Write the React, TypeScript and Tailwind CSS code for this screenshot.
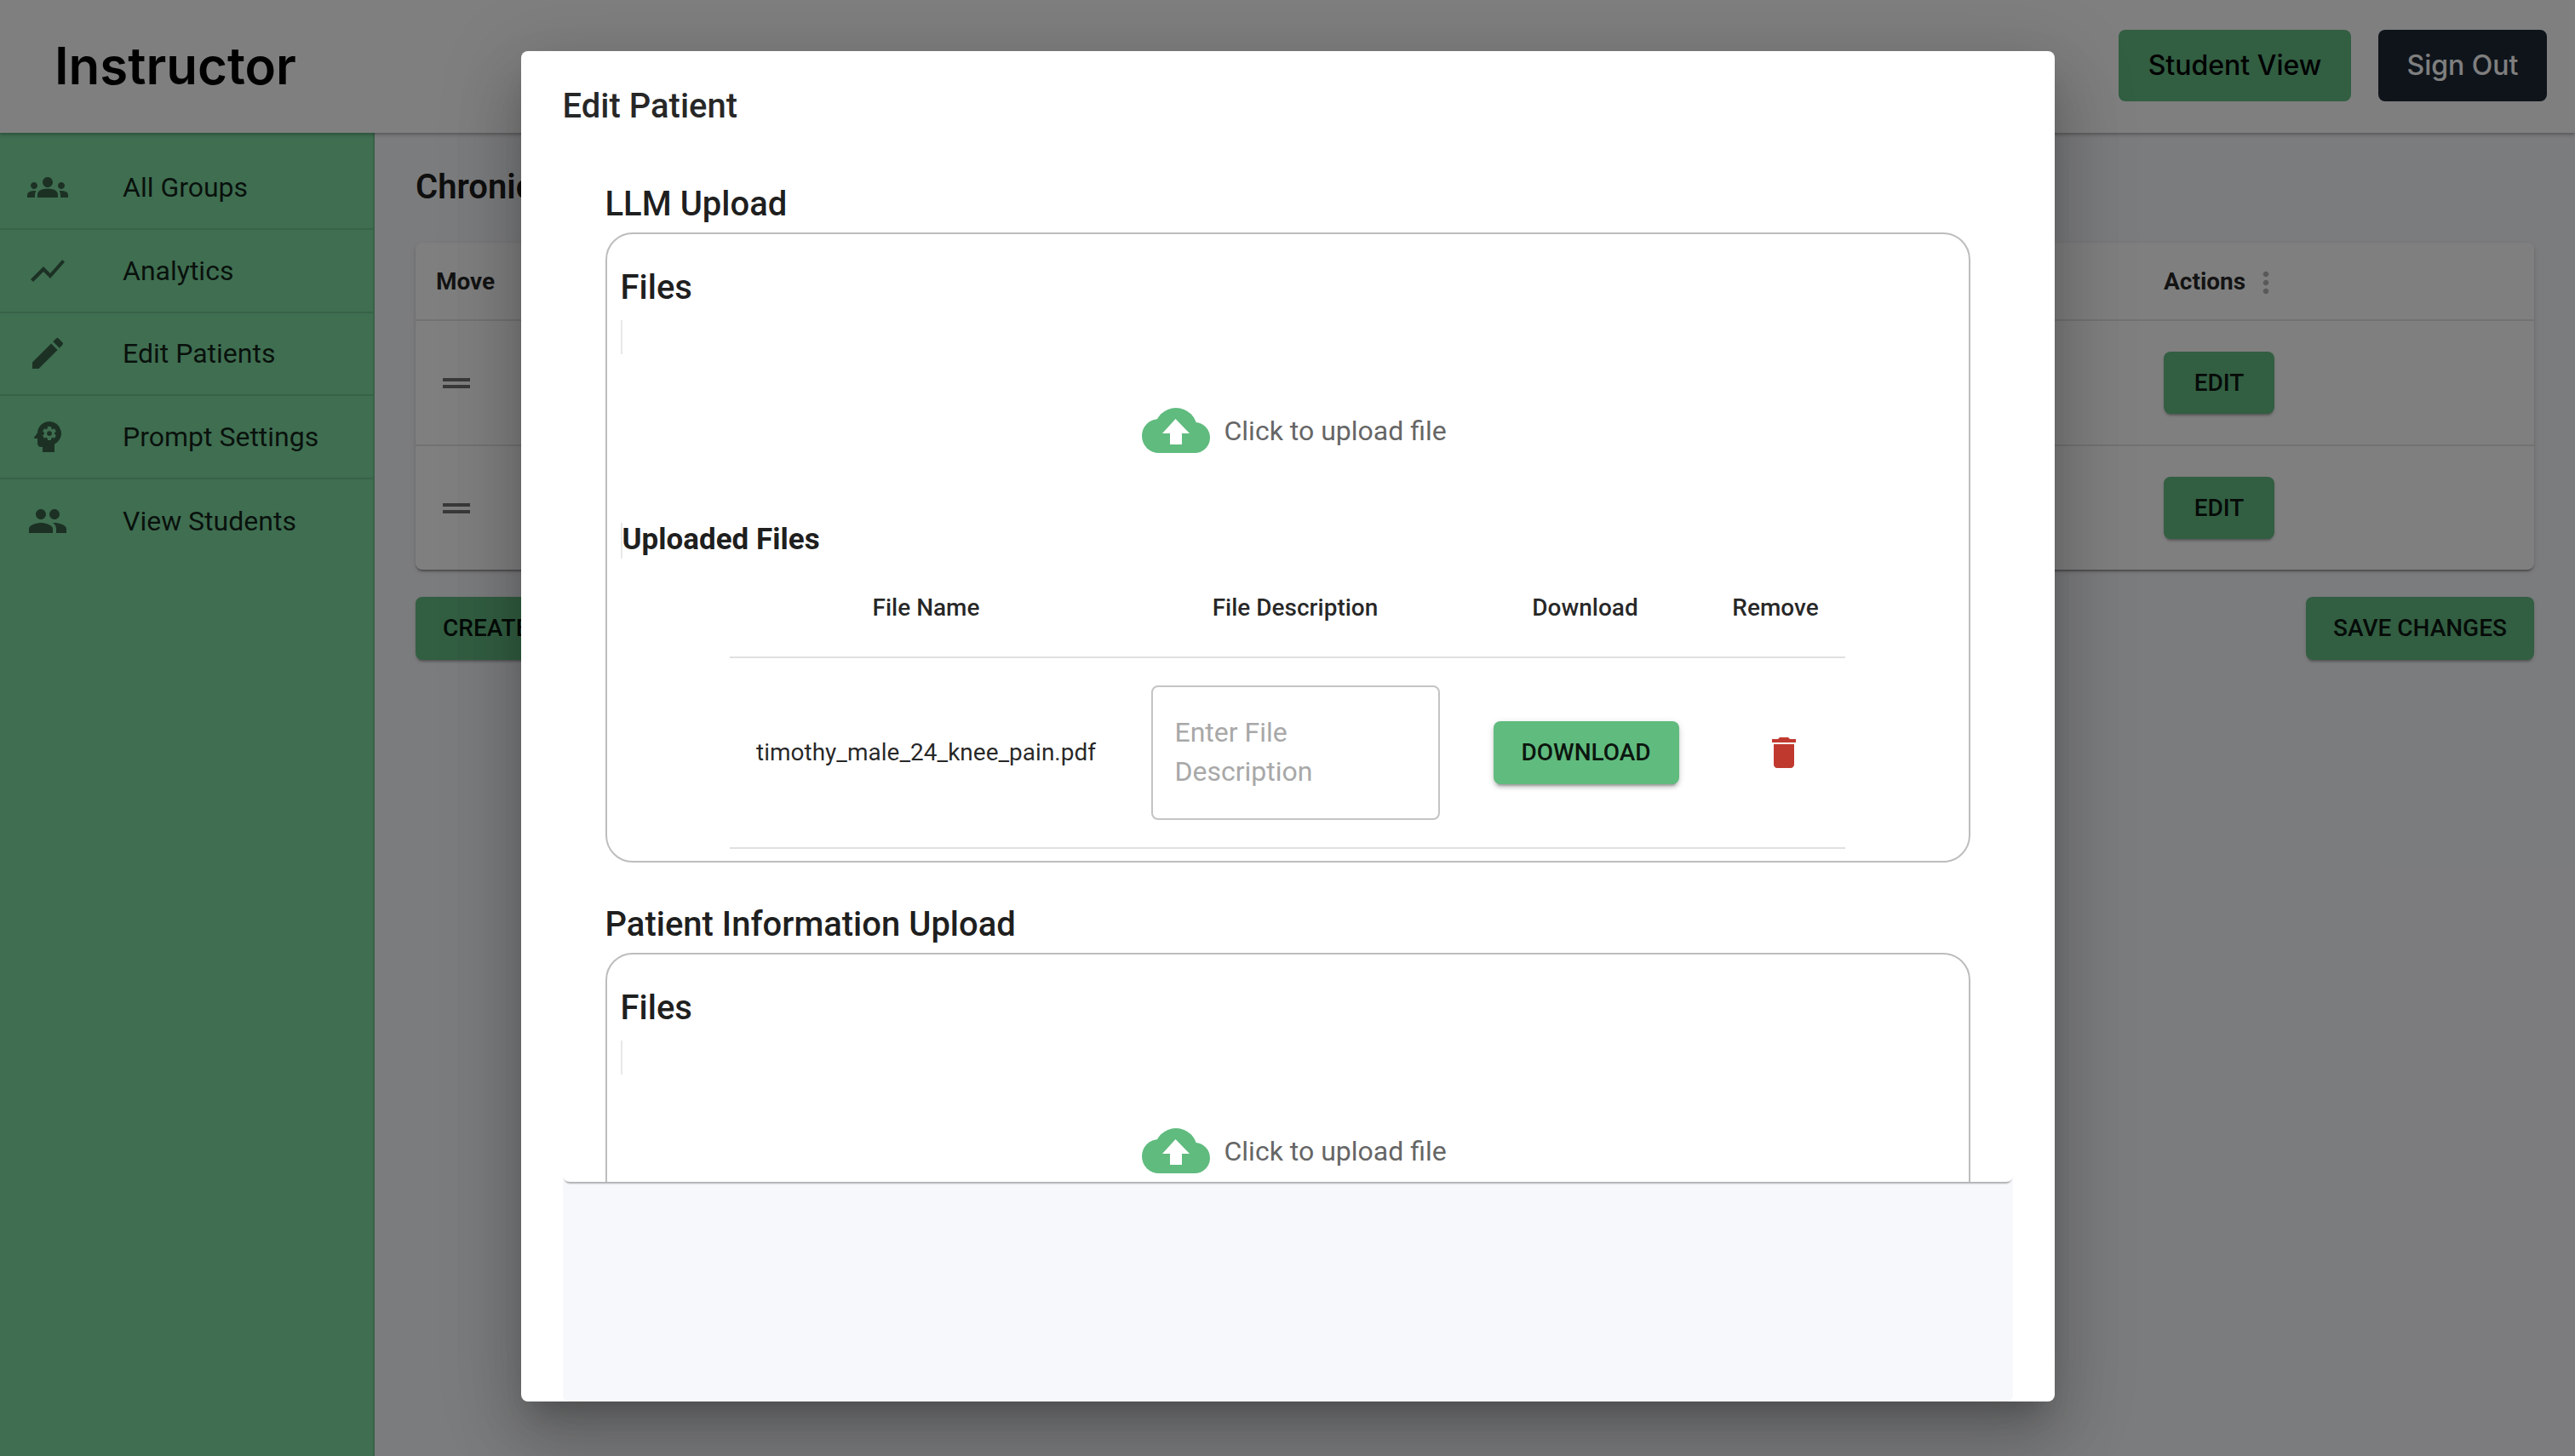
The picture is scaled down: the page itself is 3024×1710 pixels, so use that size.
import {
  MdDelete,
  MdDragHandle,
  MdEdit,
  MdGroup,
  MdGroups,
  MdMoreVert,
  MdPsychology,
  MdShowChart,
} from "react-icons/md";

const navItems = [
  { label: "All Groups", icon: <MdGroups size={48} /> },
  { label: "Analytics", icon: <MdShowChart size={48} /> },
  { label: "Edit Patients", icon: <MdEdit size={48} /> },
  { label: "Prompt Settings", icon: <MdPsychology size={48} /> },
  { label: "View Students", icon: <MdGroup size={48} /> },
];

function CloudIcon() {
  return (
    <svg width="80" height="53" viewBox="0 0 80 53" className="shrink-0">
      <g fill="#60bb7e">
        <circle cx="20" cy="33" r="20" />
        <circle cx="62" cy="35" r="18" />
        <circle cx="40" cy="25" r="25" />
        <rect x="20" y="30" width="42" height="23" />
      </g>
      <polygon points="39.5,13 56,30 47,30 47,43 33,43 33,30 24,30" fill="#ffffff" />
    </svg>
  );
}

function Sidebar() {
  return (
    <aside className="w-[440px] shrink-0 bg-[#7edca2] pt-[16px] border-r-2 border-black/10">
      {navItems.map((item, i) => (
        <div
          key={item.label}
          className={`flex h-[97.75px] items-center pl-[32px] ${i < navItems.length - 1 ? "border-b-2 border-black/10" : ""}`}
        >
          <span className="w-[112px] text-black/55">{item.icon}</span>
          <span className="text-[32px] text-black/85">{item.label}</span>
        </div>
      ))}
    </aside>
  );
}

function PatientRow({ last }: { last?: boolean }) {
  return (
    <div className={`flex items-center ${last ? "h-[145px]" : "h-[147px] border-b-2 border-black/10"}`}>
      <span className="ml-[24px] flex-1 text-black/55">
        <MdDragHandle size={48} />
      </span>
      <button className="mr-[305px] h-[73px] w-[130px] rounded-[8px] bg-[#64bd85] text-[28px] font-medium text-black/90 shadow-[0_4px_2px_-2px_rgba(0,0,0,0.2),0_2px_4px_0_rgba(0,0,0,0.14)]">
        EDIT
      </button>
    </div>
  );
}

function UploadBox({ uploaded }: { uploaded?: boolean }) {
  return (
    <div className={`rounded-[32px] border-2 border-[#bdbdbd] pl-[16px] pt-[39px] ${uploaded ? "pb-[14px]" : "pb-[200px]"}`}>
      <h3 className="text-[40px] leading-[48px] font-medium text-black/90">Files</h3>
      <div className="mt-[14px] h-[40px] w-[2px] bg-[#e8e8e8]" />
      <div className="mt-[63px] flex h-[53px] items-center">
        <div className="ml-[612px] flex items-center gap-[17px]">
          <CloudIcon />
          <span className="text-[32px] text-[#666666]">Click to upload file</span>
        </div>
      </div>
      {uploaded && (
        <>
          <div className="mt-[82px] h-[42px] border-l-2 border-[#e8e8e8] text-[35px] leading-[40px] font-bold text-black/90">
            Uploaded Files
          </div>
          <div className="ml-[128px] w-[1310px]">
            <div className="grid h-[117px] grid-cols-[462px_405px_276px_167px] items-center border-b-2 border-[#e0e0e0] text-center text-[28px] font-medium text-black/85">
              <span>File Name</span>
              <span>File Description</span>
              <span>Download</span>
              <span className="pl-[4px]">Remove</span>
            </div>
            <div className="grid h-[224px] grid-cols-[462px_405px_276px_167px] items-center border-b-2 border-[#e0e0e0] text-center text-[28px] text-black/85">
              <span>timothy_male_24_knee_pain.pdf</span>
              <div className="flex justify-center">
                <div className="flex h-[158px] w-[339px] items-center rounded-[8px] border-2 border-[#c4c4c4] pb-[2px] pl-[26px] text-left text-[32px] leading-[46px] text-[#a8a8a8]">
                  Enter File
                  <br />
                  Description
                </div>
              </div>
              <div className="flex justify-center pl-[2px]">
                <button className="h-[74px] w-[218px] rounded-[8px] bg-[#60bb7e] text-[28px] font-medium text-black/90 shadow-[0_6px_2px_-4px_rgba(0,0,0,0.2),0_4px_4px_0_rgba(0,0,0,0.14),0_2px_10px_0_rgba(0,0,0,0.12)]">
                  DOWNLOAD
                </button>
              </div>
              <div className="flex justify-center pl-[24px] text-[#c0392f]">
                <MdDelete size={48} />
              </div>
            </div>
          </div>
        </>
      )}
    </div>
  );
}

function EditPatientDialog() {
  return (
    <div className="absolute inset-0 z-20 flex items-start justify-center bg-black/50 pt-[60px]">
      <div className="flex h-[1586px] w-[1801px] flex-col rounded-[8px] bg-white px-[49px] shadow-[0_22px_30px_-14px_rgba(0,0,0,0.2),0_48px_76px_6px_rgba(0,0,0,0.14),0_18px_92px_16px_rgba(0,0,0,0.12)]">
        <h2 className="flex h-[129px] shrink-0 items-center text-[40px] font-medium text-black/85">Edit Patient</h2>
        <div className="flex min-h-0 flex-1 flex-col rounded-[8px] bg-[#f7f8fb]">
          <div className="h-[1199px] shrink-0 overflow-hidden rounded-[8px] bg-white px-[50px] pt-[21px] shadow-[0_4px_2px_-2px_rgba(0,0,0,0.3)]">
            <h3 className="mb-[3px] text-[40px] leading-[60px] font-medium text-black/90">LLM Upload</h3>
            <UploadBox uploaded />
            <h3 className="mb-[3px] mt-[43px] text-[40px] leading-[60px] font-medium text-black/90">Patient Information Upload</h3>
            <UploadBox />
          </div>
        </div>
      </div>
    </div>
  );
}

export default function App() {
  return (
    <div className="relative flex h-[1710px] w-[3024px] flex-col overflow-hidden bg-[#f7f8fb] font-['Roboto',sans-serif]">
      <header className="z-10 flex h-[156px] shrink-0 items-center justify-between bg-white pb-[2px] pl-[64px] pr-[33px] shadow-[0_2px_4px_rgba(0,0,0,0.3)]">
        <h1 className="font-['Inter',sans-serif] text-[60px] font-semibold text-black">Instructor</h1>
        <div className="flex gap-[32px] font-['Inter',sans-serif] text-[32px] font-medium">
          <button className="h-[84px] w-[273px] rounded-[8px] bg-[#64bd85] text-black">Student View</button>
          <button className="h-[84px] w-[198px] rounded-[8px] bg-[#1f2937] text-white">Sign Out</button>
        </div>
      </header>
      <div className="flex min-h-0 flex-1">
        <Sidebar />
        <main className="flex-1 px-[48px] pt-[40px]">
          <h2 className="text-[40px] leading-[48px] font-semibold text-black/90">Chronic Pain</h2>
          <div className="mt-[41px] rounded-[8px] bg-white shadow-[0_4px_2px_-2px_rgba(0,0,0,0.2),0_2px_2px_0_rgba(0,0,0,0.14),0_2px_6px_0_rgba(0,0,0,0.12)]">
            <div className="flex h-[92px] items-center border-b-2 border-black/10 pl-[24px] pt-[2px] text-[28px] font-bold text-black/85">
              <span className="flex-1">Move</span>
              <span className="mr-[100px] flex w-[335px] items-center">
                Actions
                <MdMoreVert size={40} className="ml-[4px] mt-[2px] text-black/30" />
              </span>
            </div>
            <PatientRow />
            <PatientRow last />
          </div>
          <div className="mt-[32px] flex justify-between">
            <button className="h-[74px] rounded-[8px] bg-[#64bd85] px-[32px] text-[28px] font-medium text-black/90 shadow-[0_4px_2px_-2px_rgba(0,0,0,0.2),0_2px_4px_0_rgba(0,0,0,0.14)]">
              CREATE NEW PATIENT
            </button>
            <button className="h-[74px] w-[268px] rounded-[8px] bg-[#64bd85] text-[28px] font-medium text-black/90 shadow-[0_4px_2px_-2px_rgba(0,0,0,0.2),0_2px_4px_0_rgba(0,0,0,0.14)]">
              SAVE CHANGES
            </button>
          </div>
        </main>
      </div>
      <EditPatientDialog />
    </div>
  );
}
